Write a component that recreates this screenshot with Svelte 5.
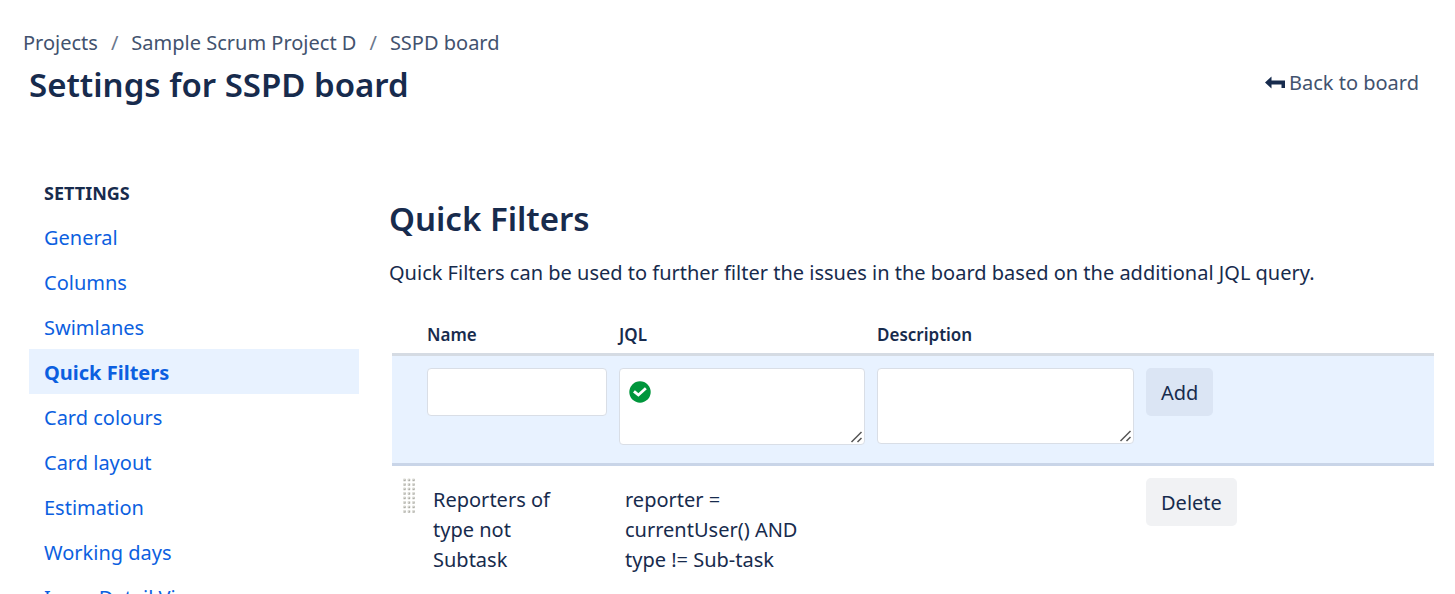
<script>
    let settings = ['General', 'Columns', 'Swimlanes', 'Quick Filters', 'Card colours', 'Card layout', 'Estimation', 'Working days', 'Issue Detail View'];
    let current = $state('Quick Filters');

    let filters = $state([
        {name: 'Reporters of type not Subtask', jql: 'reporter = currentUser() AND type != Sub-task', description: ''}
    ]);

    let name = $state('');
    let jql = $state('');
    let description = $state('');

    function addFilter() {
        if (!name) {
            return;
        }

        filters.unshift({name, jql, description});
        name = '';
        jql = '';
        description = '';
    }
</script>

<div class="page">
    <header>
        <div>
            <nav class="breadcrumbs" aria-label="Breadcrumbs">
                <a href="#projects">Projects</a>
                <span>/</span>
                <a href="#project">Sample Scrum Project D</a>
                <span>/</span>
                <a href="#board">SSPD board</a>
            </nav>
            <h1>Settings for SSPD board</h1>
        </div>
        <a class="back" href="#board">
            <svg width="20" height="14" viewBox="0 0 20 14" aria-hidden="true">
                <path d="M0 6.5 6.5 0.5V4.5H20V12H16.5V8.5H6.5V12.5Z" fill="#172b4d" />
            </svg>
            Back to board
        </a>
    </header>

    <div class="columns">
        <nav class="sidebar" aria-label="Settings">
            <h3>SETTINGS</h3>
            {#each settings as item}
                <a href="#{item}" class:selected={item === current} onclick={() => current = item}>{item}</a>
            {/each}
        </nav>

        <main>
            <h2>Quick Filters</h2>
            <p>Quick Filters can be used to further filter the issues in the board based on the additional JQL query.</p>

            <table>
                <colgroup>
                    <col class="col-drag" />
                    <col class="col-name" />
                    <col class="col-jql" />
                    <col class="col-description" />
                    <col />
                </colgroup>
                <thead>
                    <tr>
                        <th></th>
                        <th>Name</th>
                        <th>JQL</th>
                        <th>Description</th>
                        <th></th>
                    </tr>
                </thead>
                <tbody>
                    <tr class="create">
                        <td></td>
                        <td><input type="text" aria-label="Name" bind:value={name} /></td>
                        <td>
                            <div class="jql">
                                <textarea class="tall" aria-label="JQL" bind:value={jql}></textarea>
                                <svg class="valid" width="22" height="22" viewBox="0 0 22 22" aria-hidden="true">
                                    <circle cx="11" cy="11" r="10.7" fill="#00963c" />
                                    <path d="M6 11.2 9.4 14 15.8 8.2" fill="none" stroke="#fff" stroke-width="2.8" stroke-linecap="square" />
                                </svg>
                            </div>
                        </td>
                        <td><textarea aria-label="Description" bind:value={description}></textarea></td>
                        <td><button onclick={addFilter}>Add</button></td>
                    </tr>
                    {#each filters as filter, i}
                        <tr>
                            <td class="drag">
                                <svg width="12" height="36" viewBox="0 0 12 36" aria-hidden="true">
                                    {#each Array(8) as _, y}
                                        {#each Array(3) as _, x}
                                            <rect x={x * 4.5} y={y * 4.5 + 0.5} width="3" height="3" rx="1" fill="#dcdcd6" />
                                            <path d="M{x * 4.5 + 0.5} {y * 4.5 + 3}h2v-2z" fill="#aaaaa5" />
                                        {/each}
                                    {/each}
                                </svg>
                            </td>
                            <td><div class="value">{filter.name}</div></td>
                            <td><div class="value">{filter.jql}</div></td>
                            <td><div class="value">{filter.description}</div></td>
                            <td><button onclick={() => filters.splice(i, 1)}>Delete</button></td>
                        </tr>
                    {/each}
                </tbody>
            </table>
        </main>
    </div>
</div>

<style>
    :global(body) {
        background: white;
    }

    .page {
        box-sizing: border-box;
        height: 100vh;
        overflow: hidden;
        padding: 28px 21px 0 23px;
        color: #172b4d;
        font-family: "Segoe UI", "Noto Sans", sans-serif;
        font-size: 20px;
        line-height: 30px;
    }

    a {
        color: #42526e;
        text-decoration: none;
    }

    h1, h2, h3, p {
        margin: 0;
    }

    header {
        display: flex;
        justify-content: space-between;
        align-items: flex-end;
        padding-right: 15px;
    }

    .breadcrumbs {
        display: flex;
        gap: 13px;
        color: #6b778c;
    }

    h1, h2 {
        font-size: 33px;
        line-height: 42px;
        font-weight: 600;
    }

    h1 {
        margin-top: 6px;
        padding-left: 6px;
    }

    .back {
        display: flex;
        align-items: center;
        gap: 4px;
        margin-bottom: 8px;
    }

    .columns {
        display: flex;
        gap: 30px;
        margin-top: 72px;
        padding-left: 6px;
    }

    .sidebar {
        flex: 0 0 330px;
    }

    .sidebar h3 {
        padding: 0 15px;
        margin-bottom: 6px;
        font-size: 18px;
        font-weight: 700;
    }

    .sidebar a {
        display: block;
        padding: 9px 15px 6px;
        color: #0c5fe0;
    }

    .sidebar a.selected {
        background: #e8f2ff;
        font-weight: 700;
    }

    main {
        flex: 1;
        min-width: 0;
        padding-top: 20px;
    }

    main p {
        margin: 18px 0 32px;
    }

    table {
        width: calc(100% - 3px);
        margin-left: 3px;
        table-layout: fixed;
        border-collapse: collapse;
    }

    .col-drag {
        width: 29px;
    }

    .col-name {
        width: 192px;
    }

    .col-jql {
        width: 258px;
    }

    .col-description {
        width: 269px;
    }

    th {
        padding: 0 6px 3px;
        font-size: 17px;
        font-weight: 600;
        text-align: left;
    }

    thead tr {
        border-bottom: 3px solid #d5dbe3;
    }

    td {
        padding: 12px 6px;
        vertical-align: top;
    }

    .create {
        background: #e8f2ff;
        border-bottom: 3px solid #c9d5e8;
    }

    .create td {
        padding-bottom: 18px;
    }

    input, textarea {
        display: block;
        box-sizing: border-box;
        width: 100%;
        height: 48px;
        padding: 6px 12px;
        border: 1px solid #d9dee6;
        border-radius: 4px;
        background: white;
        color: inherit;
        font: inherit;
    }

    textarea {
        height: 76px;
        resize: both;
    }

    textarea::-webkit-resizer {
        background: url("data:image/svg+xml,%3Csvg xmlns='http://www.w3.org/2000/svg' width='15' height='15'%3E%3Cpath d='M2.5 13 12.5 3M8.5 13 12.5 9' stroke='%23555' stroke-width='1.5'/%3E%3C/svg%3E") no-repeat right bottom;
    }

    textarea.tall {
        height: 77px;
        padding-left: 36px;
    }

    .jql {
        position: relative;
    }

    .valid {
        position: absolute;
        top: 13px;
        left: 10px;
    }

    button {
        height: 48px;
        padding: 2px 15px 0;
        border: 0;
        border-radius: 5px;
        background: rgba(9, 30, 66, 0.06);
        color: inherit;
        font: inherit;
    }

    .drag {
        padding-left: 11px;
    }

    .drag svg {
        display: block;
    }

    .value {
        padding: 7px 40px 6px 6px;
    }
</style>
